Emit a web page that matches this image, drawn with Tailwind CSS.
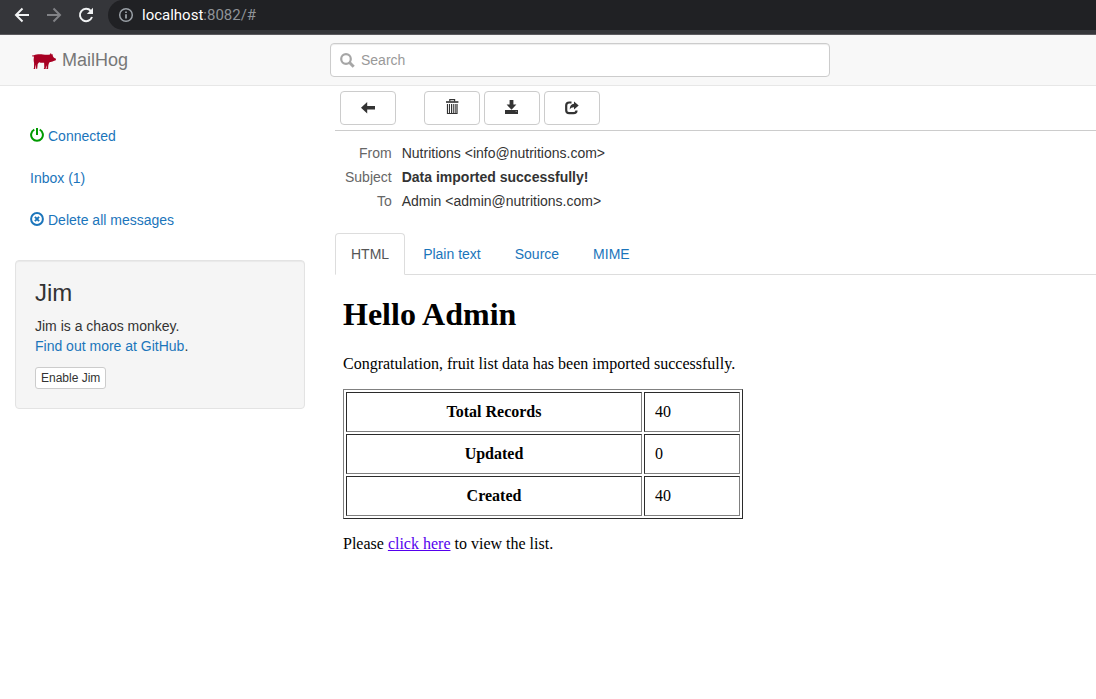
<!DOCTYPE html>
<html lang="en">
<head>
<meta charset="utf-8">
<meta name="viewport" content="width=device-width, initial-scale=1">
<title>MailHog</title>
<script src="https://cdn.jsdelivr.net/npm/@tailwindcss/browser@4"></script>
</head>
<body class="min-h-screen bg-white font-['Liberation_Sans',Arial,sans-serif] text-sm leading-5 text-[#333]">

<!-- Browser toolbar -->
<div class="flex h-[35px] items-start border-b border-[#5b5a5e] bg-[#35363a]">
  <div class="flex h-[30px] items-center gap-4 pl-3.5 pr-3.5">
    <button type="button" aria-label="Back" class="size-4">
      <svg viewBox="0 0 16 16" class="size-4" fill="none" stroke="#f1f3f4" stroke-width="2"><path d="M15 8H2.5M8.5 1.5 2 8l6.500 6.500"/></svg>
    </button>
    <button type="button" aria-label="Forward" class="size-4">
      <svg viewBox="0 0 16 16" class="size-4" fill="none" stroke="#818286" stroke-width="2"><path d="M1 8h12.500M7.500 1.500 14 8l-6.500 6.500"/></svg>
    </button>
    <button type="button" aria-label="Reload" class="size-4">
      <svg viewBox="0 0 16 16" class="size-4"><path d="M12.800 3.800A6.200 6.200 0 1 0 14 10" fill="none" stroke="#f1f3f4" stroke-width="2"/><path d="M15 0.800V7H8.800z" fill="#f1f3f4"/></svg>
    </button>
  </div>
  <div class="flex h-[30px] grow items-center gap-2 rounded-l-full bg-[#202124] pl-2.5 font-[Roboto,sans-serif] text-[15px]">
    <svg viewBox="0 0 16 16" class="size-4" fill="none" stroke="#9aa0a6" stroke-width="1.500"><circle cx="8" cy="8" r="6.300"/><path d="M8 7.200v4.200M8 4.500v1.600" stroke-width="1.800"/></svg>
    <div class="text-[#8f9398]"><span class="text-white">localhost</span>:8082/#</div>
  </div>
</div>

<!-- App header -->
<header class="flex h-[51px] items-center border-b border-[#e7e7e7] bg-[#f8f8f8]">
  <a href="#" class="ml-8 flex w-[298px] items-center gap-1.5 text-lg leading-5 text-[#777]">
    <svg viewBox="0 0 24 18" class="h-[18px] w-6" fill="#a80023"><path d="M0 4 .5 4.600 2 4.200C4 3.100 8 2.900 11 3.400c2 .4 4 .6 5.400.3l1.500-.2.900-1.500.9 1.500 1-.2.100 1.600c.4.900 1 1.600 1.600 2.200l1.600.7-.2 1.500-2.200.7c-1.400.8-2.600 1-3.800 1.100l-1 1.400-.5 2-.2 3.500h-1.900l.5-1.300-.3-2.500-.8 3.800h-1.900l.6-1.300-.2-5c-2 .2-3.400.1-5-.5L5.700 13l-.5 4.800H3.800l.3-1.300-.2-3-.9 4.500H1.600l.4-1.500.1-4.500C1.700 10 1.500 8.500 1.800 6.900L2 5.600.4 5.400z"/></svg>
    MailHog
  </a>
  <label class="flex h-[34px] w-[500px] items-center gap-1.5 rounded border border-[#ccc] bg-white px-[9px] shadow-[inset_0_1px_1px_rgba(0,0,0,0.075)]">
    <svg viewBox="0 0 15 15" class="size-[15px] shrink-0" fill="none" stroke="#a6a6a6"><circle cx="6" cy="6" r="4.800" stroke-width="2.200"/><path d="m9.500 9.500 4.200 4.200" stroke-width="3"/></svg>
    <input type="text" placeholder="Search" aria-label="Search" class="min-w-0 grow bg-transparent outline-none placeholder:text-[#999]">
  </label>
</header>

<div class="flex">
  <!-- Sidebar -->
  <aside class="w-80 shrink-0 px-[15px] pt-[30px]">
    <nav class="flex flex-col gap-0.5 text-[#1b75bb]">
      <a href="#" class="flex gap-1 px-[15px] py-2.5">
        <svg viewBox="0 0 14 14" class="mt-0.5 size-3.5" fill="none" stroke="#009a00" stroke-width="2"><path d="M4.300 1.700A5.900 5.900 0 1 0 9.700 1.700M7 0v7"/></svg>
        Connected</a>
      <a href="#" class="px-[15px] py-2.5">Inbox (1)</a>
      <a href="#" class="flex gap-1 px-[15px] py-2.5">
        <svg viewBox="0 0 14 14" class="mt-0.5 size-3.5" fill="none" stroke="currentColor" stroke-width="2"><circle cx="7" cy="7" r="5.900"/><path d="m4.900 4.900 4.200 4.200M9.100 4.900 4.900 9.100"/></svg>
        Delete all messages</a>
    </nav>
    <section class="mt-5 rounded border border-[#e3e3e3] bg-[#f5f5f5] p-[19px] shadow-[inset_0_1px_1px_rgba(0,0,0,0.05)]">
      <h3 class="mb-2.5 text-2xl leading-[26px]">Jim</h3>
      <p>Jim is a chaos monkey.<br><a href="#" class="text-[#1b75bb]">Find out more at GitHub</a>.</p>
      <button type="button" class="mt-[11px] block h-[22px] rounded-[3px] border border-[#ccc] bg-white px-[5px] text-xs leading-5">Enable Jim</button>
    </section>
  </aside>

  <!-- Message view -->
  <main class="ml-[15px] min-w-0 grow">
    <div class="flex gap-1 border-b border-[#ccc] p-[5px]">
      <button type="button" aria-label="Back to inbox" class="mr-6 flex h-[34px] w-14 items-center justify-center rounded border border-[#ccc]">
        <svg viewBox="0 0 14 14" class="size-3.5" fill="#333"><path d="M0 6.700 6.200 1v4H14v3.400H6.200v4z"/></svg>
      </button>
      <button type="button" aria-label="Delete" class="flex h-[34px] w-14 items-center justify-center rounded border border-[#ccc]">
        <svg viewBox="0 0 14 16" class="mb-0.5 h-4 w-3.5" fill="none" stroke="#333"><path d="M4.800 2.500V.6h4.800v1.900" stroke-width="1.200"/><path d="M1 3h12.400" stroke-width="1.600"/><path d="M2.500 5v9.500h9.500V5" stroke-width="1.200"/><path d="M4.500 5v9.500M6.500 5v9.500M8.300 5v9.500M10.200 5v9.500" stroke-width="1"/></svg>
      </button>
      <button type="button" aria-label="Download" class="flex h-[34px] w-14 items-center justify-center rounded border border-[#ccc]">
        <svg viewBox="0 0 14 14" class="mb-0.5 size-3.5" fill="#333"><path d="M4.600 0h3.800v4.600h3L6.500 9.700 1.600 4.600h3zM0 10h13v4H0z"/><path d="M10.500 11h1.500v.8h-1.500z" fill="#888"/></svg>
      </button>
      <button type="button" aria-label="Release" class="flex h-[34px] w-14 items-center justify-center rounded border border-[#ccc]">
        <svg viewBox="0 0 14 14" class="size-3.5"><path d="M6.500 1.500H4.200Q1.200 1.500 1.200 4.500v4.700q0 3 3 3h4.300q3 0 3-2.700" fill="none" stroke="#333" stroke-width="2.200"/><path d="M9 .6 13.700 4.500 9 8.400V6.200C7.200 6.100 5.700 6.800 4.700 8.400 4.800 5 6.400 3 9 2.800z" fill="#333"/></svg>
      </button>
    </div>

    <table class="mt-2.5 ml-2.5 text-left leading-6">
      <tbody>
        <tr><th scope="row" class="p-0 pr-2.5 text-right font-normal text-[#666]">From</th><td class="p-0">Nutritions &lt;info@nutritions.com&gt;</td></tr>
        <tr><th scope="row" class="p-0 pr-2.5 text-right font-normal text-[#666]">Subject</th><td class="p-0 font-bold">Data imported successfully!</td></tr>
        <tr><th scope="row" class="p-0 pr-2.5 text-right font-normal text-[#666]">To</th><td class="p-0">Admin &lt;admin@nutritions.com&gt;</td></tr>
      </tbody>
    </table>

    <nav class="mt-5 flex gap-0.5 border-b border-[#ddd] text-[#1b75bb]">
      <a href="#" aria-current="page" class="-mb-px rounded-t border border-[#ddd] border-b-white bg-white px-[15px] py-2.5 text-[#555]">HTML</a>
      <a href="#" class="px-4 pt-[11px] pb-2.5">Plain text</a>
      <a href="#" class="px-4 pt-[11px] pb-2.5">Source</a>
      <a href="#" class="px-4 pt-[11px] pb-2.5">MIME</a>
    </nav>

    <article class="px-2 pt-[21px] font-['Liberation_Serif','Times_New_Roman',serif] text-base leading-[18px] text-black">
      <h1 class="text-[32px] leading-9 font-bold">Hello Admin</h1>
      <p class="mt-[23px]">Congratulation, fruit list data has been imported successfully.</p>
      <table class="mt-4 w-[400px] table-fixed border-separate border-spacing-0.5 border border-t-[#808080] border-r-[#2b2b2b] border-b-[#2b2b2b] border-l-[#808080]">
        <colgroup><col class="w-[296px]"><col></colgroup>
        <tbody>
          <tr><th scope="row" class="border border-t-[#2b2b2b] border-r-[#808080] border-b-[#808080] border-l-[#2b2b2b] p-2.5">Total Records</th><td class="border border-t-[#2b2b2b] border-r-[#808080] border-b-[#808080] border-l-[#2b2b2b] p-2.5">40</td></tr>
          <tr><th scope="row" class="border border-t-[#2b2b2b] border-r-[#808080] border-b-[#808080] border-l-[#2b2b2b] p-2.5">Updated</th><td class="border border-t-[#2b2b2b] border-r-[#808080] border-b-[#808080] border-l-[#2b2b2b] p-2.5">0</td></tr>
          <tr><th scope="row" class="border border-t-[#2b2b2b] border-r-[#808080] border-b-[#808080] border-l-[#2b2b2b] p-2.5">Created</th><td class="border border-t-[#2b2b2b] border-r-[#808080] border-b-[#808080] border-l-[#2b2b2b] p-2.5">40</td></tr>
        </tbody>
      </table>
      <p class="mt-4">Please <a href="#" class="text-[#5500ee] underline">click here</a> to view the list.</p>
    </article>
  </main>
</div>
</body>
</html>
